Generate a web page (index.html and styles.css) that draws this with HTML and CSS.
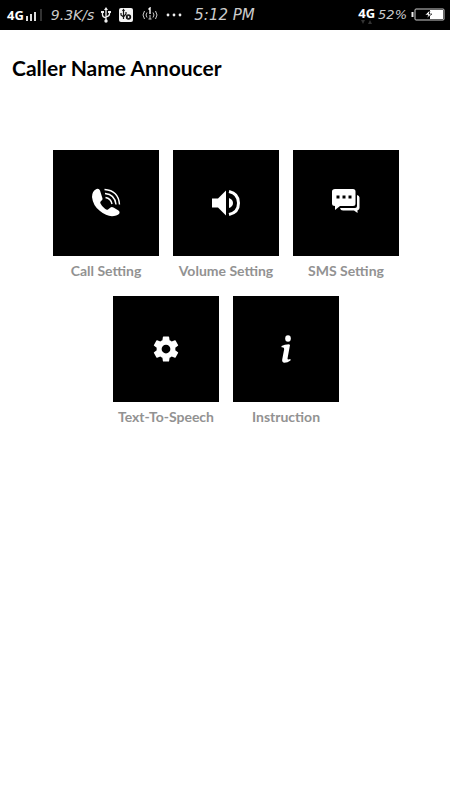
FILE: index.html
```html
<!DOCTYPE html>
<html lang="en">
<head>
<meta charset="utf-8">
<meta name="viewport" content="width=device-width, initial-scale=1">
<title>Caller Name Annoucer</title>
<link rel="stylesheet" href="styles.css">
</head>
<body>
<div class="status">
  <div class="status-group">
    <span class="network">4G</span>
    <svg class="bars" width="18" height="12" viewBox="0 0 18 12" aria-hidden="true"><path d="M1 7h2v5H1zM5 5h2v7H5zM9 3h2v9H9z" fill="#ddd"/><path d="M15 0h2v12h-2z" fill="#333"/></svg>
    <span class="speed">9.3K/s</span>
    <svg class="usb" width="10" height="16" viewBox="0 0 10 16" fill="none" stroke="#eee" aria-hidden="true"><path d="M5 2v12M1.500 5v3q0 2 3.500 3M8.500 5v2q0 2-3.500 3" stroke-width="1.300"/><path d="M5 0 7 3H3zM0 4h3v2H0zM7 4h3v2H7z" fill="#eee" stroke="none"/><circle cx="5" cy="14" r="1.700" fill="#eee" stroke="none"/></svg>
    <svg class="app" width="14" height="14" viewBox="0 0 14 14" fill="none" aria-hidden="true"><rect width="14" height="14" rx="2" fill="#f4f4f4"/><path d="M4.500 2v9M2 5v2l2.500 2L7 6V4M3.500 3l1-1.500 1 1.500" stroke="#111" stroke-width="1.200"/><circle cx="9.500" cy="9" r="2.700" fill="#111"/><path d="m8.800 7.600 2 1.400-2 1.400z" fill="#fff"/></svg>
    <svg class="cast" width="16" height="16" viewBox="0 0 16 16" fill="none" stroke="#ccc" aria-hidden="true"><path d="M2.500 4q-3 4 0 8M5 5.500q-2 2.500 0 5M13.500 4q3 4 0 8M11 5.500q2 2.500 0 5"/><path d="M6.500 2.500 8 1v6" stroke="#fff" stroke-width="1.400"/><path d="M8 8v4M6.500 12h3"/></svg>
    <svg class="dots" width="16" height="4" viewBox="0 0 16 4" fill="#eee" aria-hidden="true"><circle cx="2" cy="2" r="1.400"/><circle cx="8" cy="2" r="1.400"/><circle cx="14" cy="2" r="1.400"/></svg>
    <time class="clock">5:12 PM</time>
  </div>
  <div class="status-group">
    <span class="data"><span class="network">4G</span><svg width="12" height="4" viewBox="0 0 12 4" fill="#333" aria-hidden="true"><path d="M0 0h4L2 4zM7 4h4L9 0z"/></svg></span>
    <span class="percent">52%</span>
    <svg class="battery" width="34" height="14" viewBox="0 0 34 14" aria-hidden="true"><path d="M1.500 4v5" stroke="#eee" stroke-width="2"/><rect x="4" y="1" width="29" height="11" rx="1" fill="none" stroke="#ccc"/><path d="M19 2h13v9H19z" fill="#fff"/><path d="M18 3l-4 4h3l-1 3 5-4h-3l1-3z" fill="#fff" stroke="#000" stroke-width=".6"/></svg>
  </div>
</div>
<main>
  <h1>Caller Name Annoucer</h1>
  <nav class="tiles" aria-label="Settings">
    <button class="tile" type="button">
      <span class="face"><svg width="30" height="30" viewBox="0 0 30 30" aria-hidden="true"><path d="M5.500 1Q1 3 1 9q1 9 8 14 7 6 14 5 5-1 5.500-3 .5-1.500-1-2.500l-5-3q-1.800-1-3 0L17 21.500q-1.200.8-3-.8-3.500-2.700-4.500-5.200-.8-1.500.5-2.500 1.800-1 1.500-2.500L9 2.500Q8 0 5.500 1z" fill="#fff"/><path d="M14.500 9.500q5.500 1 6.500 6.500M14 5.500q10 1 11 11M13.500 1.500q14 1 15 15" fill="none" stroke="#fff" stroke-width="1.400"/></svg></span>
      <span class="label">Call Setting</span>
    </button>
    <button class="tile" type="button">
      <span class="face"><svg width="30" height="30" viewBox="0 0 30 30" aria-hidden="true"><path d="M1 10.500h6l8-8v25l-8-8H1zM18 10q4 1.500 4 5t-4 5z" fill="#fff"/><path d="M18 3.500q9.500 2 9.500 11.500T18 26.500" fill="none" stroke="#fff" stroke-width="3"/></svg></span>
      <span class="label">Volume Setting</span>
    </button>
    <button class="tile" type="button">
      <span class="face"><svg width="30" height="30" viewBox="0 0 30 30" aria-hidden="true"><path d="M4 1h18q2.500 0 2.500 2.500v12Q24.500 18 22 18H9l-5 4v-4q-3 0-3-2.500v-12Q1 1 4 1z" fill="#fff"/><path d="M26 7q2.500.5 2.500 2.500V20q0 2-2 2.300V25L23 22.500H12q-2.500 0-3-2.500h15q2 0 2-2z" fill="#fff"/><path d="M5.500 7.500h3v3h-3zM11.500 7.500h3v3h-3zM17.500 7.500h3v3h-3z"/></svg></span>
      <span class="label">SMS Setting</span>
    </button>
    <button class="tile" type="button">
      <span class="face"><svg width="30" height="30" viewBox="0 0 24 24" aria-hidden="true"><path fill="#fff" d="M19.430 12.980c.04-.32.07-.64.07-.98s-.03-.66-.07-.98l2.110-1.650a.5.5 0 0 0 .12-.64l-2-3.460a.5.5 0 0 0-.61-.22l-2.490 1a7.300 7.300 0 0 0-1.690-.98l-.38-2.650A.49.49 0 0 0 14 2h-4a.49.49 0 0 0-.49.42l-.38 2.650c-.61.25-1.170.59-1.690.98l-2.490-1a.5.5 0 0 0-.61.22l-2 3.460a.5.5 0 0 0 .12.64l2.110 1.650c-.04.32-.07.65-.07.98s.03.66.07.98l-2.110 1.650a.5.5 0 0 0-.12.64l2 3.460c.12.22.39.3.61.22l2.490-1c.52.4 1.080.73 1.690.98l.38 2.650c.03.24.24.42.49.42h4c.25 0 .46-.18.49-.42l.38-2.650c.61-.25 1.170-.59 1.690-.98l2.490 1c.23.09.49 0 .61-.22l2-3.460a.5.5 0 0 0-.12-.64zM12 15.500a3.500 3.500 0 1 1 0-7 3.500 3.500 0 0 1 0 7z"/></svg></span>
      <span class="label">Text-To-Speech</span>
    </button>
    <button class="tile" type="button">
      <span class="face"><svg width="30" height="30" viewBox="0 0 30 30" aria-hidden="true"><ellipse cx="17" cy="4.500" rx="2.800" ry="3.300" fill="#fff"/><path d="M10.500 12q3-1.800 7.500-1.800l1 .8-2.500 13.500q-.2 1.500 3 .5v1.500q-3 2.200-6 2.200-2.800-.3-2.300-3.200l2-10.500q.3-2-2.700-1.800z" fill="#fff"/></svg></span>
      <span class="label">Instruction</span>
    </button>
  </nav>
</main>
</body>
</html>
```
FILE: styles.css
```css
* { box-sizing: border-box; }
body {
  margin: 0;
  background: #fff;
  color: #000;
  font-family: Lato, "Liberation Sans", sans-serif;
}
.status {
  display: flex;
  justify-content: space-between;
  height: 30px;
  padding: 0 5px 0 7px;
  background: #000;
  color: #ccc;
  font: italic 15px/30px "DejaVu Sans", sans-serif;
  white-space: nowrap;
}
.status-group { display: flex; align-items: center; }
.network { font: bold 13px/14px "Open Sans", sans-serif; color: #fff; }
.bars { margin: 0 8px 0 1px; }
.speed { font-size: 14px; }
.usb { margin: 0 8px 0 7px; }
.cast { margin: 0 8px 0 9px; }
.clock { margin-left: 12px; }
.data { display: flex; flex-direction: column; align-items: center; margin-right: 3px; }
.percent { margin-right: 4px; font-size: 13px; }
h1 {
  margin: 0;
  padding: 25px 12px 0;
  font-size: 21px;
  line-height: 26px;
  font-weight: 700;
}
.tiles {
  display: flex;
  flex-wrap: wrap;
  justify-content: center;
  gap: 14px;
  max-width: 404px;
  margin: 0 auto;
  padding: 69px 20px 0 22px;
}
.tile {
  width: 106px;
  padding: 0;
  border: 0;
  background: none;
  color: #929292;
  font: 700 14px/16px Lato, "Liberation Sans", sans-serif;
  text-align: center;
  white-space: nowrap;
  cursor: pointer;
}
.face {
  display: flex;
  align-items: center;
  justify-content: center;
  height: 106px;
  margin-bottom: 7px;
  background: #000;
}
.label { display: block; margin-bottom: 3px; }
```
